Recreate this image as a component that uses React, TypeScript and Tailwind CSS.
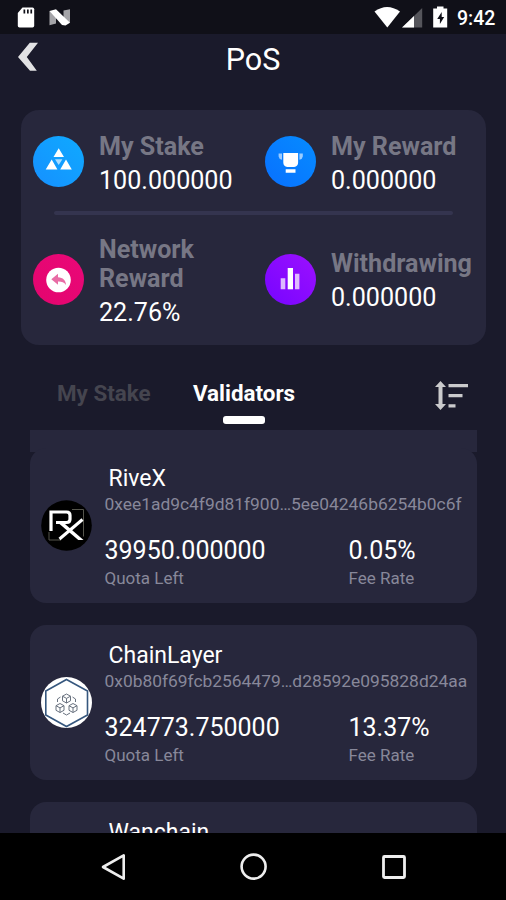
import React from 'react'

const stats = [
  { label: 'My Stake', value: '100.000000', icon: 'stake' },
  { label: 'My Reward', value: '0.000000', icon: 'reward' },
  { label: 'Network Reward', value: '22.76%', icon: 'network' },
  { label: 'Withdrawing', value: '0.000000', icon: 'withdraw' },
]

const validators = [
  {
    name: 'RiveX',
    address: '0xee1ad9c4f9d81f900…5ee04246b6254b0c6f',
    quota: '39950.000000',
    fee: '0.05%',
  },
  {
    name: 'ChainLayer',
    address: '0x0b80f69fcb2564479…d28592e095828d24aa',
    quota: '324773.750000',
    fee: '13.37%',
  },
]

function StatIcon({ name }: { name: string }) {
  return (
    <svg width="51" height="51" viewBox="0 0 51 51" className="shrink-0">
      <defs>
        <linearGradient id="stake" x1="0" y1="1" x2="1" y2="0">
          <stop offset="0" stopColor="#1690ff" />
          <stop offset="1" stopColor="#0faaff" />
        </linearGradient>
        <linearGradient id="reward" x1="0" y1="1" x2="1" y2="0">
          <stop offset="0" stopColor="#0870ff" />
          <stop offset="1" stopColor="#068cff" />
        </linearGradient>
        <linearGradient id="network" x1="0" y1="1" x2="1" y2="0">
          <stop offset="0" stopColor="#e3056e" />
          <stop offset="1" stopColor="#ea0878" />
        </linearGradient>
        <linearGradient id="withdraw" x1="0" y1="1" x2="1" y2="0">
          <stop offset="0" stopColor="#7605ff" />
          <stop offset="1" stopColor="#9c10ff" />
        </linearGradient>
      </defs>
      <circle cx="25.5" cy="25.5" r="25.5" fill={`url(#${name})`} />
      {name === 'stake' && (
        <g fill="#fff">
          <path d="M25.7 12.2 31 21H20.5zM18.7 23.5 24.4 33.5H12.7zM33 23.5 38.8 33.5H27.2z" />
          <path d="M22 23.3h7.4L25.7 29z" opacity=".65" />
        </g>
      )}
      {name === 'reward' && (
        <g fill="#fff">
          <path d="M18.3 17h14.8v9.5q0 3.8-4 4.5h-6.8q-4-.7-4-4.5zM20.7 33.3h9.8v3.4h-9.8z" />
          <path d="M17 17.4h-3.4v3q.4 2.7 3.4 3.4zM34.4 17.4h3.4v3q-.4 2.7-3.4 3.4z" opacity=".6" />
        </g>
      )}
      {name === 'network' && (
        <g>
          <circle cx="25.5" cy="26" r="12.3" fill="#fff" />
          <path d="M18.3 25.2 25 19.7v3.5c5 .2 7.7 3 8 7.7-2-2.6-4.4-3.5-8-3.4v3.3z" fill="#e86ca5" />
        </g>
      )}
      {name === 'withdraw' && (
        <g fill="#fff">
          <path d="M22.7 14h5.3v21.3h-5.3z" />
          <path d="M15.7 24.3h4.6v11h-4.6zM30 19.8h4.4v15.5H30z" opacity=".72" />
        </g>
      )}
    </svg>
  )
}

function RivexLogo() {
  return (
    <svg width="51" height="51" viewBox="0 0 51 51">
      <circle cx="25.5" cy="25.5" r="25.3" fill="#000" />
      <path d="M31 9.5h11.5v27M8 32v8h12" fill="none" stroke="#55554c" strokeWidth="1" />
      <path
        d="M10 31V12h15.5q3.5 0 3.5 3.2v4q0 3.3-3.5 3.3H15"
        fill="none"
        stroke="#fff"
        strokeWidth="3.2"
      />
      <path d="M15 21h5.5L42.5 40h-5.2z" fill="#fff" />
      <path d="M41.5 19.5 18.5 39" fill="none" stroke="#fff" strokeWidth="3" />
    </svg>
  )
}

function ChainLogo() {
  return (
    <svg width="51" height="51" viewBox="0 0 51 51">
      <circle cx="25.5" cy="25.5" r="25.5" fill="#fff" />
      <path d="M25.5 2.5 46.5 14v24L25.5 49.5 4.8 38V14z" fill="none" stroke="#36577e" strokeWidth="1.6" />
      <g fill="none" stroke="#69727f" strokeWidth="1">
        <path d="m25.5 17 4 2.2v4.6l-4 2.2-4-2.2v-4.6zm-4 2.2 4 2.2 4-2.2m-4 2.2V26" />
        <path d="m19 26.5 4 2.2v4.6l-4 2.2-4-2.2v-4.6zm-4 2.2 4 2.2 4-2.2m-4 2.2v4.6" />
        <path d="m32 26.5 4 2.2v4.6l-4 2.2-4-2.2v-4.6zm-4 2.2 4 2.2 4-2.2m-4 2.2v4.6" />
        <path d="m19.5 20-3 2v3M31.5 20l3 2v3M22 36l3.5 2 3.5-2" />
      </g>
    </svg>
  )
}

function StatusBar() {
  return (
    <div className="flex h-[34px] shrink-0 items-center bg-[#101018]">
      <svg width="506" height="34" viewBox="0 0 506 34" fill="#fff">
        {/* sd card + N */}
        <path d="M22.5 7.5h10q1.7 0 1.7 1.7v16.6q0 1.7-1.7 1.7h-13q-1.7 0-1.7-1.7V13z" />
        <path d="M23.5 9.5h1.7v4h-1.7zM27 9.5h1.7v4H27zM30.4 9.5h1.7v4h-1.7z" fill="#101018" />
        <path d="M49.5 11v14.2l6.5-1.7V13zM63.5 10.5l6.5-1.2V23l-6.5-3z" fill="#a4a4a8" />
        <path d="M49.5 11 56 9.3 70 22.8l-4.5 2.7-3.5-.6z" />
        {/* wifi, signal, battery */}
        <path d="M374.5 11.5Q387 2.5 400 11.5L387.3 27.5z" />
        <path d="M422.2 8v19.5h-20z" fill="#55555b" />
        <path d="M414 16v11.5h-12z" />
        <path d="M437 6.5h6.5v2h3.7v19h-14v-19h3.8z" />
        <path d="m441.7 12-4.5 7h2.7v5l4.3-7h-2.5z" fill="#101018" />
        <text x="457" y="25" fontFamily="Roboto" fontWeight="500" fontSize="19.5">9:42</text>
      </svg>
    </div>
  )
}

export default function App() {
  return (
    <div className="flex h-[900px] w-[506px] flex-col overflow-hidden bg-[#1a1a2b] font-['Roboto',sans-serif] text-white">
      <StatusBar />

      <header className="grid h-[76px] shrink-0 grid-cols-3 items-start px-[17px] pt-2">
        <svg width="22" height="30" viewBox="0 0 22 30">
          <path d="M12.8.8H21L9.8 15 19.8 28.8H13L1 15z" fill="#e2e2e4" />
        </svg>
        <h1 className="pt-px text-center text-[30.5px] leading-[34px]">PoS</h1>
      </header>

      <section className="mx-[21px] h-[235px] w-[465px] shrink-0 rounded-[18px] bg-[#27273c] px-3">
        <div className="grid h-[101px] grid-cols-[232px_1fr] items-center pt-0.5">
          {stats.slice(0, 2).map((item) => (
            <Stat key={item.label} {...item} />
          ))}
        </div>
        <div className="mx-[21px] h-1 rounded-full bg-[#34344f]" />
        <div className="grid h-[130px] grid-cols-[232px_1fr] items-center pb-0.5">
          {stats.slice(2).map((item) => (
            <Stat key={item.label} {...item} />
          ))}
        </div>
      </section>

      {/* Tabs */}
      <nav className="flex h-[85px] shrink-0 items-start pl-[57px] pr-[37px] pt-[34px] text-[22.4px] font-bold leading-7">
        <span className="w-[136px] text-[#45454f]">My Stake</span>
        <div className="flex w-[102px] flex-col items-center">
          <span>Validators</span>
          <span className="mt-[9px] h-2 w-[42px] rounded-[3px] bg-white" />
        </div>
        <svg width="34" height="30" viewBox="0 0 34 30" className="ml-auto mt-0.5" fill="#cacacc">
          <path d="M5.5 0 11 6H7.5v17H11l-5.5 6L0 23h3.5V6H0z" />
          <path d="M13.5 3H33v3.2H13.5zM13.5 13h14v3.2h-14zM13.5 23.2h7v3.2h-7z" />
        </svg>
      </nav>

      <main className="min-h-0 flex-1 overflow-hidden px-[30px]">
        <div className="h-[22px] w-[447px] bg-[#27273c]" />
        <div className="-mt-1 flex flex-col gap-[22px]">
          {validators.map((v, i) => (
            <article key={v.name} className="flex h-[155px] w-[447px] rounded-2xl bg-[#27273c] pl-[11px]">
              <div className="mt-[52px] w-[63.5px] shrink-0">{i === 0 ? <RivexLogo /> : <ChainLogo />}</div>
              <div className="flex flex-col whitespace-nowrap">
                <h2 className="mt-4 pl-1 text-[23px] leading-[30px]">{v.name}</h2>
                <p className="-mt-px text-[17.4px] leading-[22px] text-[#88889a]">{v.address}</p>
                <div className="mt-[21px] grid grid-cols-[244px_1fr]">
                  <Figure value={v.quota} label="Quota Left" />
                  <Figure value={v.fee} label="Fee Rate" />
                </div>
              </div>
            </article>
          ))}
          <article className="h-[155px] w-[447px] rounded-2xl bg-[#27273c] pl-[78.5px] pt-4">
            <h2 className="text-[23px] leading-[30px]">Wanchain</h2>
          </article>
        </div>
      </main>

      <footer className="flex h-[67px] shrink-0 items-center justify-between bg-black pl-[100px] pr-[98px]">
        <svg width="28" height="28" viewBox="0 0 28 28">
          <path d="M23.7 2.3v23.4L3 14z" fill="none" stroke="#eee" strokeWidth="2.6" strokeLinejoin="round" />
        </svg>
        <svg width="28" height="28" viewBox="0 0 28 28">
          <circle cx="13.6" cy="13.6" r="12" fill="none" stroke="#eee" strokeWidth="2.6" />
        </svg>
        <svg width="28" height="28" viewBox="0 0 28 28">
          <rect x="3.5" y="3.5" width="21" height="21" rx="1" fill="none" stroke="#eee" strokeWidth="2.8" />
        </svg>
      </footer>
    </div>
  )
}

function Stat({ label, value, icon }: { label: string; value: string; icon: string }) {
  return (
    <div className="flex items-center">
      <StatIcon name={icon} />
      <div className="ml-[15px] w-[144px] pt-[3px] text-[25.1px]">
        <div className="font-bold leading-[29px] text-[#777785]">{label}</div>
        <div className="mt-[5px] leading-[29px]">{value}</div>
      </div>
    </div>
  )
}

function Figure({ value, label }: { value: string; label: string }) {
  return (
    <div>
      <div className="text-[25px] leading-[30px]">{value}</div>
      <div className="text-[17px] leading-6 text-[#88889a]">{label}</div>
    </div>
  )
}
